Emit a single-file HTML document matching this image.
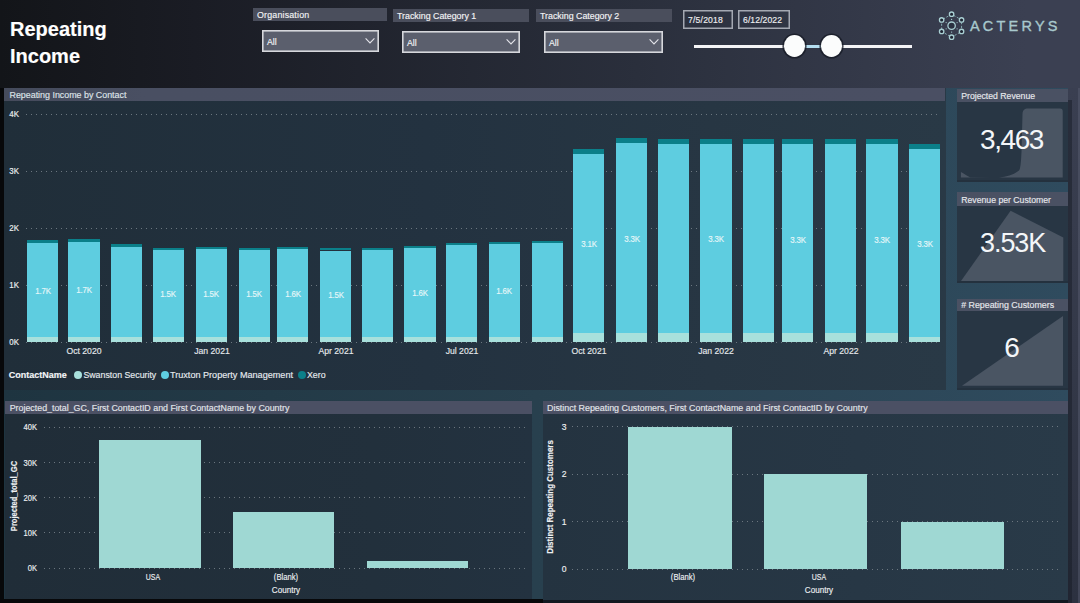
<!DOCTYPE html>
<html><head><meta charset="utf-8"><style>
html,body{margin:0;padding:0;width:1080px;height:603px;overflow:hidden;background:#1a1c24}
.r{position:absolute;box-sizing:content-box}
.t{position:absolute;white-space:nowrap;line-height:20px;height:20px;font-family:"Liberation Sans", sans-serif;-webkit-text-stroke:0.15px currentColor}
</style></head><body>
<div class="r" style="left:0px;top:0px;width:1080px;height:603px;background:linear-gradient(90deg,#131519 0%,#1a1c24 18%,#2a2f3c 59%,#3b4052 95%,#3b4052 100%);"></div>
<div class="r" style="left:4px;top:88px;width:1064px;height:511px;background:linear-gradient(90deg,#1e3440 0%,#28404e 50%,#2f4b5e 100%);"></div>
<div class="r" style="left:0px;top:88px;width:4px;height:515px;background:#07080a;"></div>
<div class="r" style="left:1068px;top:88px;width:12px;height:515px;background:linear-gradient(180deg,#3a3f51 0%,#343949 50%,#2c3140 100%);"></div>
<div class="r" style="left:1068px;top:100px;width:4px;height:503px;background:rgba(20,24,34,0.45);"></div>
<div class="r" style="left:1078px;top:88px;width:2px;height:515px;background:rgba(90,95,115,0.45);"></div>
<div class="r" style="left:0px;top:599px;width:543px;height:4px;background:#07080a;"></div>
<div class="r" style="left:543px;top:600px;width:525px;height:3px;background:#111820;"></div>
<div class="t" style="left:10px;top:19.00px;font-size:20px;color:#ffffff;font-weight:700;letter-spacing:0px;">Repeating</div>
<div class="t" style="left:10px;top:46.00px;font-size:20px;color:#ffffff;font-weight:700;letter-spacing:0px;">Income</div>
<div class="r" style="left:253px;top:8px;width:134px;height:13px;background:#4a4e5c;"></div>
<div class="t" style="left:257.3px;top:5.40px;font-size:9.5px;color:#f4f4f6;font-weight:400;letter-spacing:0.2px;transform:scaleX(0.93);transform-origin:left center;">Organisation</div>
<svg class="r" style="left:262px;top:30px" width="117" height="22"><rect x="0.8" y="0.8" width="115.4" height="20.4" fill="#5b5f6d" stroke="#d6d7dc" stroke-width="1.6"/></svg>
<div class="t" style="left:267.3px;top:32.00px;font-size:9.3px;color:#f4f4f6;font-weight:400;letter-spacing:0px;transform:scaleX(0.94);transform-origin:left center;">All</div>
<svg class="r" style="left:364px;top:37.3px" width="12" height="8" viewBox="0 0 12 8"><polyline points="1.6,1.4 6,5.9 10.4,1.4" fill="none" stroke="#e4e4ea" stroke-width="1.1"/></svg>
<div class="r" style="left:393px;top:9px;width:136px;height:13px;background:#4a4e5c;"></div>
<div class="t" style="left:397.3px;top:6.40px;font-size:9.5px;color:#f4f4f6;font-weight:400;letter-spacing:0px;transform:scaleX(0.93);transform-origin:left center;">Tracking Category 1</div>
<svg class="r" style="left:402px;top:31px" width="118" height="22"><rect x="0.8" y="0.8" width="116.4" height="20.4" fill="#5b5f6d" stroke="#d6d7dc" stroke-width="1.6"/></svg>
<div class="t" style="left:407.3px;top:33.00px;font-size:9.3px;color:#f4f4f6;font-weight:400;letter-spacing:0px;transform:scaleX(0.94);transform-origin:left center;">All</div>
<svg class="r" style="left:505px;top:38.3px" width="12" height="8" viewBox="0 0 12 8"><polyline points="1.6,1.4 6,5.9 10.4,1.4" fill="none" stroke="#e4e4ea" stroke-width="1.1"/></svg>
<div class="r" style="left:536px;top:9px;width:136px;height:13px;background:#4a4e5c;"></div>
<div class="t" style="left:540.3px;top:6.40px;font-size:9.5px;color:#f4f4f6;font-weight:400;letter-spacing:0px;transform:scaleX(0.93);transform-origin:left center;">Tracking Category 2</div>
<svg class="r" style="left:544px;top:31px" width="119" height="22"><rect x="0.8" y="0.8" width="117.4" height="20.4" fill="#5b5f6d" stroke="#d6d7dc" stroke-width="1.6"/></svg>
<div class="t" style="left:549.3px;top:33.00px;font-size:9.3px;color:#f4f4f6;font-weight:400;letter-spacing:0px;transform:scaleX(0.94);transform-origin:left center;">All</div>
<svg class="r" style="left:648px;top:38.3px" width="12" height="8" viewBox="0 0 12 8"><polyline points="1.6,1.4 6,5.9 10.4,1.4" fill="none" stroke="#e4e4ea" stroke-width="1.1"/></svg>
<svg class="r" style="left:683px;top:10px" width="50" height="19"><rect x="0.75" y="0.75" width="48.5" height="17.5" fill="none" stroke="#a4a8b2" stroke-width="1.5"/></svg>
<svg class="r" style="left:738px;top:10px" width="52" height="19"><rect x="0.75" y="0.75" width="50.5" height="17.5" fill="none" stroke="#a4a8b2" stroke-width="1.5"/></svg>
<div class="t" style="left:688px;top:9.80px;font-size:8.6px;color:#eeeef0;font-weight:400;letter-spacing:0.2px;">7/5/2018</div>
<div class="t" style="left:743px;top:9.80px;font-size:8.6px;color:#eeeef0;font-weight:400;letter-spacing:0.1px;">6/12/2022</div>
<div class="r" style="left:694px;top:44.5px;width:218px;height:3px;background:#f4f4f6;"></div>
<div class="r" style="left:795px;top:44.5px;width:36px;height:3px;background:#b4def0;"></div>
<div class="r" style="left:783.6px;top:35.2px;width:21.4px;height:21.8px;border-radius:50%;background:#fbfcfc;box-shadow:0 0 0 1.6px rgba(22,26,36,0.75)"></div>
<div class="r" style="left:820.9px;top:35.2px;width:21.4px;height:21.8px;border-radius:50%;background:#fbfcfc;box-shadow:0 0 0 1.6px rgba(22,26,36,0.75)"></div>
<svg class="r" style="left:0;top:0" width="1080" height="80" viewBox="0 0 1080 80"><polygon points="951.60,14.20 941.64,19.95 941.64,31.45 951.60,37.20 961.56,31.45 961.56,19.95" fill="none" stroke="#8fb5bb" stroke-width="0.9" stroke-dasharray="2.2 1.6"/><circle cx="951.60" cy="14.20" r="2.2" fill="#1e2432" stroke="#a9cfd3" stroke-width="1.3"/><circle cx="941.64" cy="19.95" r="2.2" fill="#1e2432" stroke="#a9cfd3" stroke-width="1.3"/><circle cx="941.64" cy="31.45" r="2.2" fill="#1e2432" stroke="#a9cfd3" stroke-width="1.3"/><circle cx="951.60" cy="37.20" r="2.2" fill="#1e2432" stroke="#a9cfd3" stroke-width="1.3"/><circle cx="961.56" cy="31.45" r="2.2" fill="#1e2432" stroke="#a9cfd3" stroke-width="1.3"/><circle cx="961.56" cy="19.95" r="2.2" fill="#1e2432" stroke="#a9cfd3" stroke-width="1.3"/><circle cx="951.6" cy="25.7" r="3.7" fill="#2a3140" stroke="#a9cfd3" stroke-width="1.3"/><circle cx="951.60" cy="19.38" r="0.6" fill="#a9cfd3"/><circle cx="946.12" cy="22.54" r="0.6" fill="#a9cfd3"/><circle cx="946.12" cy="28.86" r="0.6" fill="#a9cfd3"/><circle cx="951.60" cy="32.03" r="0.6" fill="#a9cfd3"/><circle cx="957.08" cy="28.86" r="0.6" fill="#a9cfd3"/><circle cx="957.08" cy="22.54" r="0.6" fill="#a9cfd3"/></svg>
<div class="t" style="left:970px;top:16.00px;font-size:14.5px;color:#a8c9cd;font-weight:400;letter-spacing:3.2px;-webkit-text-stroke:0.35px #a8c9cd;">ACTERYS</div>
<div class="r" style="left:4px;top:88px;width:942px;height:302px;background:linear-gradient(90deg,#202e39 0%,#233240 45%,#273643 75%,#293946 100%);"></div>
<div class="r" style="left:4px;top:88px;width:941px;height:13px;background:linear-gradient(90deg,#454b5c 0%,#494f62 15%,#4a4f63 100%);"></div>
<div class="t" style="left:9.5px;top:85.00px;font-size:8.9px;color:#dfe3e8;font-weight:400;letter-spacing:0px;">Repeating Income by Contact</div>
<div class="t" style="left:-11.20px;width:30px;text-align:right;top:104.00px;font-size:8.6px;color:#eef0f2;font-weight:400;letter-spacing:0px;transform:scaleX(0.92);transform-origin:right center;">4K</div>
<div class="r" style="left:26px;top:113.5px;width:915px;height:1px;background:repeating-linear-gradient(90deg,#6b767f 0,#6b767f 1.2px,transparent 1.2px,transparent 5px)"></div>
<div class="t" style="left:-11.20px;width:30px;text-align:right;top:161.00px;font-size:8.6px;color:#eef0f2;font-weight:400;letter-spacing:0px;transform:scaleX(0.92);transform-origin:right center;">3K</div>
<div class="r" style="left:26px;top:170.5px;width:915px;height:1px;background:repeating-linear-gradient(90deg,#6b767f 0,#6b767f 1.2px,transparent 1.2px,transparent 5px)"></div>
<div class="t" style="left:-11.20px;width:30px;text-align:right;top:218.00px;font-size:8.6px;color:#eef0f2;font-weight:400;letter-spacing:0px;transform:scaleX(0.92);transform-origin:right center;">2K</div>
<div class="r" style="left:26px;top:227.5px;width:915px;height:1px;background:repeating-linear-gradient(90deg,#6b767f 0,#6b767f 1.2px,transparent 1.2px,transparent 5px)"></div>
<div class="t" style="left:-11.20px;width:30px;text-align:right;top:275.00px;font-size:8.6px;color:#eef0f2;font-weight:400;letter-spacing:0px;transform:scaleX(0.92);transform-origin:right center;">1K</div>
<div class="r" style="left:26px;top:284.5px;width:915px;height:1px;background:repeating-linear-gradient(90deg,#6b767f 0,#6b767f 1.2px,transparent 1.2px,transparent 5px)"></div>
<div class="t" style="left:-11.20px;width:30px;text-align:right;top:332.00px;font-size:8.6px;color:#eef0f2;font-weight:400;letter-spacing:0px;transform:scaleX(0.92);transform-origin:right center;">0K</div>
<div class="r" style="left:26px;top:341.5px;width:915px;height:1px;background:repeating-linear-gradient(90deg,#6b767f 0,#6b767f 1.2px,transparent 1.2px,transparent 5px)"></div>
<div class="r" style="left:26.96px;top:239.80px;width:31.2px;height:3.20px;background:#0b7f89;"></div>
<div class="r" style="left:26.96px;top:243.00px;width:31.2px;height:93.70px;background:#5ecde0;"></div>
<div class="r" style="left:26.96px;top:336.70px;width:31.2px;height:5.30px;background:#a8e0dc;"></div>
<div class="t" style="left:12.56px;width:60px;text-align:center;top:280.75px;font-size:9.2px;color:#e6f7f9;font-weight:400;letter-spacing:-0.2px;transform:scaleX(0.86);transform-origin:center center;">1.7K</div>
<div class="r" style="left:68.44px;top:239.20px;width:31.2px;height:3.00px;background:#0b7f89;"></div>
<div class="r" style="left:68.44px;top:242.20px;width:31.2px;height:94.50px;background:#5ecde0;"></div>
<div class="r" style="left:68.44px;top:336.70px;width:31.2px;height:5.30px;background:#a8e0dc;"></div>
<div class="t" style="left:54.04px;width:60px;text-align:center;top:280.35px;font-size:9.2px;color:#e6f7f9;font-weight:400;letter-spacing:-0.2px;transform:scaleX(0.86);transform-origin:center center;">1.7K</div>
<div class="r" style="left:111.31px;top:244.40px;width:31.2px;height:2.20px;background:#0b7f89;"></div>
<div class="r" style="left:111.31px;top:246.60px;width:31.2px;height:90.10px;background:#5ecde0;"></div>
<div class="r" style="left:111.31px;top:336.70px;width:31.2px;height:5.30px;background:#a8e0dc;"></div>
<div class="r" style="left:152.80px;top:247.80px;width:31.2px;height:2.10px;background:#0b7f89;"></div>
<div class="r" style="left:152.80px;top:249.90px;width:31.2px;height:86.80px;background:#5ecde0;"></div>
<div class="r" style="left:152.80px;top:336.70px;width:31.2px;height:5.30px;background:#a8e0dc;"></div>
<div class="t" style="left:138.40px;width:60px;text-align:center;top:284.20px;font-size:9.2px;color:#e6f7f9;font-weight:400;letter-spacing:-0.2px;transform:scaleX(0.86);transform-origin:center center;">1.5K</div>
<div class="r" style="left:195.66px;top:247.10px;width:31.2px;height:2.10px;background:#0b7f89;"></div>
<div class="r" style="left:195.66px;top:249.20px;width:31.2px;height:87.50px;background:#5ecde0;"></div>
<div class="r" style="left:195.66px;top:336.70px;width:31.2px;height:5.30px;background:#a8e0dc;"></div>
<div class="t" style="left:181.26px;width:60px;text-align:center;top:283.85px;font-size:9.2px;color:#e6f7f9;font-weight:400;letter-spacing:-0.2px;transform:scaleX(0.86);transform-origin:center center;">1.5K</div>
<div class="r" style="left:238.53px;top:248.20px;width:31.2px;height:2.10px;background:#0b7f89;"></div>
<div class="r" style="left:238.53px;top:250.30px;width:31.2px;height:86.40px;background:#5ecde0;"></div>
<div class="r" style="left:238.53px;top:336.70px;width:31.2px;height:5.30px;background:#a8e0dc;"></div>
<div class="t" style="left:224.13px;width:60px;text-align:center;top:284.40px;font-size:9.2px;color:#e6f7f9;font-weight:400;letter-spacing:-0.2px;transform:scaleX(0.86);transform-origin:center center;">1.5K</div>
<div class="r" style="left:277.25px;top:246.70px;width:31.2px;height:2.30px;background:#0b7f89;"></div>
<div class="r" style="left:277.25px;top:249.00px;width:31.2px;height:87.70px;background:#5ecde0;"></div>
<div class="r" style="left:277.25px;top:336.70px;width:31.2px;height:5.30px;background:#a8e0dc;"></div>
<div class="t" style="left:262.85px;width:60px;text-align:center;top:283.75px;font-size:9.2px;color:#e6f7f9;font-weight:400;letter-spacing:-0.2px;transform:scaleX(0.86);transform-origin:center center;">1.6K</div>
<div class="r" style="left:320.12px;top:248.30px;width:31.2px;height:2.20px;background:#0b7f89;"></div>
<div class="r" style="left:320.12px;top:250.50px;width:31.2px;height:86.20px;background:#5ecde0;"></div>
<div class="r" style="left:320.12px;top:336.70px;width:31.2px;height:5.30px;background:#a8e0dc;"></div>
<div class="t" style="left:305.72px;width:60px;text-align:center;top:284.50px;font-size:9.2px;color:#e6f7f9;font-weight:400;letter-spacing:-0.2px;transform:scaleX(0.86);transform-origin:center center;">1.5K</div>
<div class="r" style="left:361.60px;top:247.80px;width:31.2px;height:2.10px;background:#0b7f89;"></div>
<div class="r" style="left:361.60px;top:249.90px;width:31.2px;height:86.80px;background:#5ecde0;"></div>
<div class="r" style="left:361.60px;top:336.70px;width:31.2px;height:5.30px;background:#a8e0dc;"></div>
<div class="r" style="left:404.47px;top:245.70px;width:31.2px;height:2.20px;background:#0b7f89;"></div>
<div class="r" style="left:404.47px;top:247.90px;width:31.2px;height:88.80px;background:#5ecde0;"></div>
<div class="r" style="left:404.47px;top:336.70px;width:31.2px;height:5.30px;background:#a8e0dc;"></div>
<div class="t" style="left:390.07px;width:60px;text-align:center;top:283.20px;font-size:9.2px;color:#e6f7f9;font-weight:400;letter-spacing:-0.2px;transform:scaleX(0.86);transform-origin:center center;">1.6K</div>
<div class="r" style="left:445.95px;top:243.10px;width:31.2px;height:2.20px;background:#0b7f89;"></div>
<div class="r" style="left:445.95px;top:245.30px;width:31.2px;height:91.40px;background:#5ecde0;"></div>
<div class="r" style="left:445.95px;top:336.70px;width:31.2px;height:5.30px;background:#a8e0dc;"></div>
<div class="r" style="left:488.82px;top:242.10px;width:31.2px;height:2.20px;background:#0b7f89;"></div>
<div class="r" style="left:488.82px;top:244.30px;width:31.2px;height:92.40px;background:#5ecde0;"></div>
<div class="r" style="left:488.82px;top:336.70px;width:31.2px;height:5.30px;background:#a8e0dc;"></div>
<div class="t" style="left:474.42px;width:60px;text-align:center;top:281.40px;font-size:9.2px;color:#e6f7f9;font-weight:400;letter-spacing:-0.2px;transform:scaleX(0.86);transform-origin:center center;">1.6K</div>
<div class="r" style="left:531.69px;top:241.10px;width:31.2px;height:2.20px;background:#0b7f89;"></div>
<div class="r" style="left:531.69px;top:243.30px;width:31.2px;height:93.40px;background:#5ecde0;"></div>
<div class="r" style="left:531.69px;top:336.70px;width:31.2px;height:5.30px;background:#a8e0dc;"></div>
<div class="r" style="left:573.17px;top:148.50px;width:31.2px;height:5.20px;background:#0b7f89;"></div>
<div class="r" style="left:573.17px;top:153.70px;width:31.2px;height:179.60px;background:#5ecde0;"></div>
<div class="r" style="left:573.17px;top:333.30px;width:31.2px;height:8.70px;background:#a8e0dc;"></div>
<div class="t" style="left:558.77px;width:60px;text-align:center;top:234.40px;font-size:9.2px;color:#e6f7f9;font-weight:400;letter-spacing:-0.2px;transform:scaleX(0.86);transform-origin:center center;">3.1K</div>
<div class="r" style="left:616.04px;top:137.80px;width:31.2px;height:5.20px;background:#0b7f89;"></div>
<div class="r" style="left:616.04px;top:143.00px;width:31.2px;height:189.80px;background:#5ecde0;"></div>
<div class="r" style="left:616.04px;top:332.80px;width:31.2px;height:9.20px;background:#a8e0dc;"></div>
<div class="t" style="left:601.64px;width:60px;text-align:center;top:228.80px;font-size:9.2px;color:#e6f7f9;font-weight:400;letter-spacing:-0.2px;transform:scaleX(0.86);transform-origin:center center;">3.3K</div>
<div class="r" style="left:657.53px;top:138.90px;width:31.2px;height:5.20px;background:#0b7f89;"></div>
<div class="r" style="left:657.53px;top:144.10px;width:31.2px;height:188.70px;background:#5ecde0;"></div>
<div class="r" style="left:657.53px;top:332.80px;width:31.2px;height:9.20px;background:#a8e0dc;"></div>
<div class="r" style="left:700.39px;top:138.90px;width:31.2px;height:5.20px;background:#0b7f89;"></div>
<div class="r" style="left:700.39px;top:144.10px;width:31.2px;height:188.70px;background:#5ecde0;"></div>
<div class="r" style="left:700.39px;top:332.80px;width:31.2px;height:9.20px;background:#a8e0dc;"></div>
<div class="t" style="left:685.99px;width:60px;text-align:center;top:229.35px;font-size:9.2px;color:#e6f7f9;font-weight:400;letter-spacing:-0.2px;transform:scaleX(0.86);transform-origin:center center;">3.3K</div>
<div class="r" style="left:743.26px;top:139.00px;width:31.2px;height:5.20px;background:#0b7f89;"></div>
<div class="r" style="left:743.26px;top:144.20px;width:31.2px;height:188.60px;background:#5ecde0;"></div>
<div class="r" style="left:743.26px;top:332.80px;width:31.2px;height:9.20px;background:#a8e0dc;"></div>
<div class="r" style="left:781.98px;top:139.10px;width:31.2px;height:5.30px;background:#0b7f89;"></div>
<div class="r" style="left:781.98px;top:144.40px;width:31.2px;height:188.40px;background:#5ecde0;"></div>
<div class="r" style="left:781.98px;top:332.80px;width:31.2px;height:9.20px;background:#a8e0dc;"></div>
<div class="t" style="left:767.58px;width:60px;text-align:center;top:229.50px;font-size:9.2px;color:#e6f7f9;font-weight:400;letter-spacing:-0.2px;transform:scaleX(0.86);transform-origin:center center;">3.3K</div>
<div class="r" style="left:824.85px;top:139.10px;width:31.2px;height:5.30px;background:#0b7f89;"></div>
<div class="r" style="left:824.85px;top:144.40px;width:31.2px;height:188.40px;background:#5ecde0;"></div>
<div class="r" style="left:824.85px;top:332.80px;width:31.2px;height:9.20px;background:#a8e0dc;"></div>
<div class="r" style="left:866.33px;top:139.10px;width:31.2px;height:5.30px;background:#0b7f89;"></div>
<div class="r" style="left:866.33px;top:144.40px;width:31.2px;height:188.40px;background:#5ecde0;"></div>
<div class="r" style="left:866.33px;top:332.80px;width:31.2px;height:9.20px;background:#a8e0dc;"></div>
<div class="t" style="left:851.93px;width:60px;text-align:center;top:229.50px;font-size:9.2px;color:#e6f7f9;font-weight:400;letter-spacing:-0.2px;transform:scaleX(0.86);transform-origin:center center;">3.3K</div>
<div class="r" style="left:909.20px;top:144.10px;width:31.2px;height:4.90px;background:#0b7f89;"></div>
<div class="r" style="left:909.20px;top:149.00px;width:31.2px;height:187.80px;background:#5ecde0;"></div>
<div class="r" style="left:909.20px;top:336.80px;width:31.2px;height:5.20px;background:#a8e0dc;"></div>
<div class="t" style="left:894.80px;width:60px;text-align:center;top:233.80px;font-size:9.2px;color:#e6f7f9;font-weight:400;letter-spacing:-0.2px;transform:scaleX(0.86);transform-origin:center center;">3.3K</div>
<div class="t" style="left:44.44px;width:80px;text-align:center;top:341.20px;font-size:9.2px;color:#e6e9ec;font-weight:400;letter-spacing:0px;transform:scaleX(0.94);transform-origin:center center;">Oct 2020</div>
<div class="t" style="left:171.66px;width:80px;text-align:center;top:341.20px;font-size:9.2px;color:#e6e9ec;font-weight:400;letter-spacing:0px;transform:scaleX(0.94);transform-origin:center center;">Jan 2021</div>
<div class="t" style="left:296.12px;width:80px;text-align:center;top:341.20px;font-size:9.2px;color:#e6e9ec;font-weight:400;letter-spacing:0px;transform:scaleX(0.94);transform-origin:center center;">Apr 2021</div>
<div class="t" style="left:421.95px;width:80px;text-align:center;top:341.20px;font-size:9.2px;color:#e6e9ec;font-weight:400;letter-spacing:0px;transform:scaleX(0.94);transform-origin:center center;">Jul 2021</div>
<div class="t" style="left:549.17px;width:80px;text-align:center;top:341.20px;font-size:9.2px;color:#e6e9ec;font-weight:400;letter-spacing:0px;transform:scaleX(0.94);transform-origin:center center;">Oct 2021</div>
<div class="t" style="left:676.39px;width:80px;text-align:center;top:341.20px;font-size:9.2px;color:#e6e9ec;font-weight:400;letter-spacing:0px;transform:scaleX(0.94);transform-origin:center center;">Jan 2022</div>
<div class="t" style="left:800.85px;width:80px;text-align:center;top:341.20px;font-size:9.2px;color:#e6e9ec;font-weight:400;letter-spacing:0px;transform:scaleX(0.94);transform-origin:center center;">Apr 2022</div>
<div class="t" style="left:8.8px;top:365.00px;font-size:9px;color:#f4f6f8;font-weight:700;letter-spacing:0px;">ContactName</div>
<div class="r" style="left:74px;top:371px;width:8px;height:8px;border-radius:50%;background:#a8e0dc"></div>
<div class="t" style="left:83.4px;top:365.00px;font-size:8.8px;color:#e6eaee;font-weight:400;letter-spacing:0px;">Swanston Security</div>
<div class="r" style="left:160.7px;top:371px;width:8px;height:8px;border-radius:50%;background:#5ecde0"></div>
<div class="t" style="left:170px;top:365.00px;font-size:9.1px;color:#e6eaee;font-weight:400;letter-spacing:0px;">Truxton Property Management</div>
<div class="r" style="left:297.6px;top:371px;width:8px;height:8px;border-radius:50%;background:#0b7f89"></div>
<div class="t" style="left:307px;top:365.00px;font-size:8.8px;color:#e6eaee;font-weight:400;letter-spacing:0px;">Xero</div>
<div class="r" style="left:957px;top:89px;width:111px;height:13px;background:#4a5163;"></div>
<div class="t" style="left:961.2px;top:86.00px;font-size:8.7px;color:#e6e8ec;font-weight:400;letter-spacing:0px;">Projected Revenue</div>
<div class="r" style="left:957px;top:102px;width:111px;height:80px;background:#283644;"></div>
<div class="r" style="left:957px;top:180px;width:111px;height:2px;background:#24313e;"></div>
<svg class="r" style="left:957px;top:102px" width="111" height="80" viewBox="0 0 111 80"><path d="M3.9,70 C6,71 10,74 13,75.2 L35,75.4 L42,75.4 C50,75 57,72.5 62,68.5 C63.5,67 64,60 64.5,50 L65.5,12 C65.8,8 67.5,6.5 71,6.5 L103,6.5 C105,6.5 105.7,7.5 105.7,9 L105.7,75.6 L3.9,75.6 Z" fill="#4a5563"/></svg>
<div class="t" style="left:951.50px;width:120px;text-align:center;top:129.50px;font-size:28px;color:#f4f6f8;font-weight:400;letter-spacing:-1.4px;-webkit-text-stroke:0;">3,463</div>
<div class="r" style="left:957px;top:192px;width:111px;height:14px;background:#4a5163;"></div>
<div class="t" style="left:961.2px;top:189.50px;font-size:8.7px;color:#e6e8ec;font-weight:400;letter-spacing:0px;">Revenue per Customer</div>
<div class="r" style="left:957px;top:206px;width:111px;height:77px;background:#283644;"></div>
<div class="r" style="left:957px;top:281px;width:111px;height:2px;background:#24313e;"></div>
<svg class="r" style="left:957px;top:206px" width="111" height="77" viewBox="0 0 111 77"><path d="M4,75 L53.6,4.8 L106.3,31.6 L106.3,75 Z" fill="#4a5563"/></svg>
<div class="t" style="left:952.60px;width:120px;text-align:center;top:232.80px;font-size:27px;color:#f4f6f8;font-weight:400;letter-spacing:-1.1px;-webkit-text-stroke:0;">3.53K</div>
<div class="r" style="left:957px;top:299px;width:111px;height:12px;background:#4a5163;"></div>
<div class="t" style="left:961.2px;top:295.00px;font-size:8.85px;color:#e6e8ec;font-weight:400;letter-spacing:0px;"># Repeating Customers</div>
<div class="r" style="left:957px;top:311px;width:111px;height:79px;background:#283644;"></div>
<div class="r" style="left:957px;top:388px;width:111px;height:2px;background:#24313e;"></div>
<svg class="r" style="left:957px;top:311px" width="111" height="79" viewBox="0 0 111 79"><path d="M5,74.8 L106,5 L106,74.8 Z" fill="#4a5563"/></svg>
<div class="t" style="left:982.00px;width:60px;text-align:center;top:338.00px;font-size:28px;color:#f4f6f8;font-weight:400;letter-spacing:0px;-webkit-text-stroke:0;">6</div>
<div class="r" style="left:5px;top:400.5px;width:527px;height:198.5px;background:linear-gradient(90deg,#202d38 0%,#22303c 70%,#233240 100%);"></div>
<div class="r" style="left:5px;top:400.5px;width:527px;height:13.2px;background:#4b5064;"></div>
<div class="t" style="left:9.7px;top:398.00px;font-size:8.85px;color:#e2e5ea;font-weight:400;letter-spacing:0px;">Projected_total_GC, First ContactID and First ContactName by Country</div>
<div class="t" style="left:-2.60px;width:40px;text-align:right;top:417.40px;font-size:8.6px;color:#eef0f2;font-weight:400;letter-spacing:0px;transform:scaleX(0.88);transform-origin:right center;">40K</div>
<div class="r" style="left:44px;top:426.7px;width:483px;height:1px;background:repeating-linear-gradient(90deg,#6b767f 0,#6b767f 1.2px,transparent 1.2px,transparent 5px)"></div>
<div class="t" style="left:-2.60px;width:40px;text-align:right;top:452.60px;font-size:8.6px;color:#eef0f2;font-weight:400;letter-spacing:0px;transform:scaleX(0.88);transform-origin:right center;">30K</div>
<div class="r" style="left:44px;top:461.9px;width:483px;height:1px;background:repeating-linear-gradient(90deg,#6b767f 0,#6b767f 1.2px,transparent 1.2px,transparent 5px)"></div>
<div class="t" style="left:-2.60px;width:40px;text-align:right;top:487.80px;font-size:8.6px;color:#eef0f2;font-weight:400;letter-spacing:0px;transform:scaleX(0.88);transform-origin:right center;">20K</div>
<div class="r" style="left:44px;top:497.1px;width:483px;height:1px;background:repeating-linear-gradient(90deg,#6b767f 0,#6b767f 1.2px,transparent 1.2px,transparent 5px)"></div>
<div class="t" style="left:-2.60px;width:40px;text-align:right;top:523.00px;font-size:8.6px;color:#eef0f2;font-weight:400;letter-spacing:0px;transform:scaleX(0.88);transform-origin:right center;">10K</div>
<div class="r" style="left:44px;top:532.3px;width:483px;height:1px;background:repeating-linear-gradient(90deg,#6b767f 0,#6b767f 1.2px,transparent 1.2px,transparent 5px)"></div>
<div class="t" style="left:-2.60px;width:40px;text-align:right;top:558.20px;font-size:8.6px;color:#eef0f2;font-weight:400;letter-spacing:0px;transform:scaleX(0.88);transform-origin:right center;">0K</div>
<div class="r" style="left:44px;top:567.5px;width:483px;height:1px;background:repeating-linear-gradient(90deg,#6b767f 0,#6b767f 1.2px,transparent 1.2px,transparent 5px)"></div>
<div class="r" style="left:99.2px;top:439.5px;width:101.5px;height:128.5px;background:#9fd8d3;"></div>
<div class="r" style="left:233px;top:512px;width:101.3px;height:56px;background:#9fd8d3;"></div>
<div class="r" style="left:366.7px;top:561.3px;width:101.2px;height:6.7px;background:#9fd8d3;"></div>
<div class="t" style="left:122.70px;width:60px;text-align:center;top:567.30px;font-size:8.6px;color:#eceef0;font-weight:400;letter-spacing:0px;transform:scaleX(0.81);transform-origin:center center;">USA</div>
<div class="t" style="left:256.30px;width:60px;text-align:center;top:567.30px;font-size:8.6px;color:#eceef0;font-weight:400;letter-spacing:0px;transform:scaleX(0.89);transform-origin:center center;">(Blank)</div>
<div class="t" style="left:246.40px;width:80px;text-align:center;top:579.80px;font-size:8.6px;color:#eceef0;font-weight:400;letter-spacing:0px;transform:scaleX(0.94);transform-origin:center center;">Country</div>
<div class="t" style="left:-35.8px;top:486.2px;width:100px;text-align:center;font-size:9.6px;font-weight:700;color:#eef0f2;transform:rotate(-90deg) scaleX(0.79);line-height:20px">Projected_total_GC</div>
<div class="r" style="left:543px;top:400.5px;width:525px;height:199.5px;background:linear-gradient(90deg,#243340 0%,#273745 60%,#293a48 100%);"></div>
<div class="r" style="left:543px;top:400.5px;width:525px;height:13.2px;background:#4b5064;"></div>
<div class="t" style="left:547px;top:398.00px;font-size:8.9px;color:#e2e5ea;font-weight:400;letter-spacing:0px;">Distinct Repeating Customers, First ContactName and First ContactID by Country</div>
<div class="t" style="left:526.50px;width:40px;text-align:right;top:416.70px;font-size:8.6px;color:#eef0f2;font-weight:400;letter-spacing:0px;">3</div>
<div class="r" style="left:572px;top:426.2px;width:490px;height:1px;background:repeating-linear-gradient(90deg,#6b767f 0,#6b767f 1.2px,transparent 1.2px,transparent 5px)"></div>
<div class="t" style="left:526.50px;width:40px;text-align:right;top:464.10px;font-size:8.6px;color:#eef0f2;font-weight:400;letter-spacing:0px;">2</div>
<div class="r" style="left:572px;top:473.6px;width:490px;height:1px;background:repeating-linear-gradient(90deg,#6b767f 0,#6b767f 1.2px,transparent 1.2px,transparent 5px)"></div>
<div class="t" style="left:526.50px;width:40px;text-align:right;top:511.60px;font-size:8.6px;color:#eef0f2;font-weight:400;letter-spacing:0px;">1</div>
<div class="r" style="left:572px;top:521.1px;width:490px;height:1px;background:repeating-linear-gradient(90deg,#6b767f 0,#6b767f 1.2px,transparent 1.2px,transparent 5px)"></div>
<div class="t" style="left:526.50px;width:40px;text-align:right;top:559.00px;font-size:8.6px;color:#eef0f2;font-weight:400;letter-spacing:0px;">0</div>
<div class="r" style="left:572px;top:568.5px;width:490px;height:1px;background:repeating-linear-gradient(90deg,#6b767f 0,#6b767f 1.2px,transparent 1.2px,transparent 5px)"></div>
<div class="r" style="left:628.2px;top:426.7px;width:103.8px;height:142.3px;background:#9fd8d3;"></div>
<div class="r" style="left:764.2px;top:474.1px;width:103px;height:94.9px;background:#9fd8d3;"></div>
<div class="r" style="left:900.6px;top:521.5px;width:103.1px;height:47.5px;background:#9fd8d3;"></div>
<div class="t" style="left:652.70px;width:60px;text-align:center;top:567.30px;font-size:8.6px;color:#eceef0;font-weight:400;letter-spacing:0px;transform:scaleX(0.89);transform-origin:center center;">(Blank)</div>
<div class="t" style="left:788.50px;width:60px;text-align:center;top:567.30px;font-size:8.6px;color:#eceef0;font-weight:400;letter-spacing:0px;transform:scaleX(0.81);transform-origin:center center;">USA</div>
<div class="t" style="left:778.50px;width:80px;text-align:center;top:579.80px;font-size:8.6px;color:#eceef0;font-weight:400;letter-spacing:0px;transform:scaleX(0.94);transform-origin:center center;">Country</div>
<div class="t" style="left:479.6px;top:487.2px;width:140px;text-align:center;font-size:9.6px;font-weight:700;color:#eef0f2;transform:rotate(-90deg) scaleX(0.83);line-height:20px">Distinct Repeating Customers</div>
</body></html>
